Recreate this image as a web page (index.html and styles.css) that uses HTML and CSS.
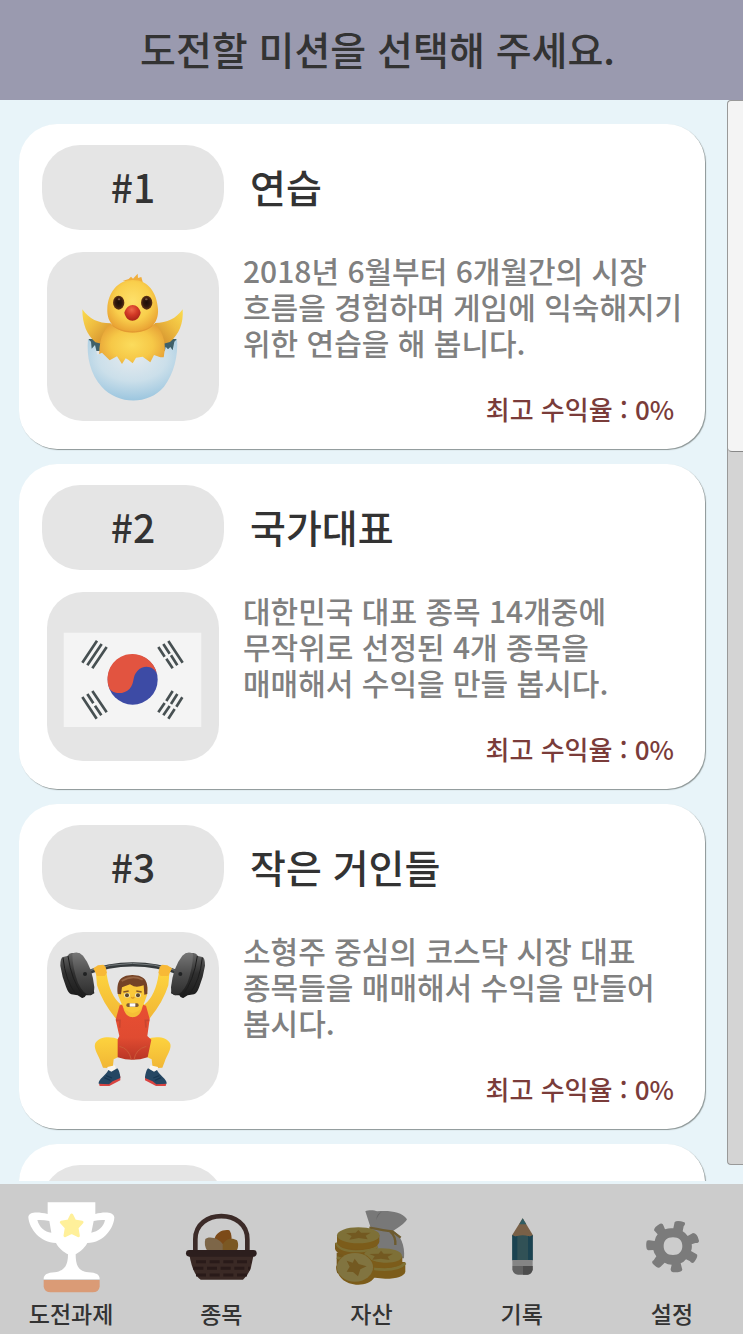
FILE: index.html
```html
<!DOCTYPE html>
<html lang="ko">
<head>
  <meta charset="UTF-8" />
  <meta name="viewport" content="width=device-width, initial-scale=1.0"/>
  <title>도전과제</title>
  <link rel="stylesheet" href="styles.css">
</head>
<body>

  <header class="header">
    <h1>도전할 미션을 선택해 주세요.</h1>
  </header>

  <main class="content">
    <div class="missions">

      <article class="card">
        <div class="card-head">
          <span class="number">#1</span>
          <h2>연습</h2>
        </div>
        <div class="card-body">
          <div class="picture">
            <svg viewBox="21 21 516 507" aria-hidden="true">
              <defs>
                <radialGradient id="chickHead" cx=".5" cy=".4" r=".6">
                  <stop offset="0" stop-color="#fde06a"/><stop offset=".6" stop-color="#f9cf4c"/><stop offset="1" stop-color="#e9a233"/>
                </radialGradient>
                <radialGradient id="chickBody" cx=".5" cy=".45" r=".58">
                  <stop offset="0" stop-color="#fbdc5c"/><stop offset=".55" stop-color="#f6c847"/><stop offset="1" stop-color="#e59e35"/>
                </radialGradient>
                <linearGradient id="wingLeft" x1="0" y1="0" x2="1" y2="1">
                  <stop offset="0" stop-color="#fbdc4e"/><stop offset=".4" stop-color="#efbd40"/><stop offset="1" stop-color="#c98027"/>
                </linearGradient>
                <linearGradient id="wingRight" x1="1" y1="0" x2="0" y2="1">
                  <stop offset="0" stop-color="#fbdc4e"/><stop offset=".4" stop-color="#efbd40"/><stop offset="1" stop-color="#c98027"/>
                </linearGradient>
                <radialGradient id="shell" cx=".5" cy=".3" r=".7">
                  <stop offset="0" stop-color="#e4eaee"/><stop offset=".55" stop-color="#cbdfea"/><stop offset="1" stop-color="#9cc6df"/>
                </radialGradient>
                <radialGradient id="beak" cx=".45" cy=".3" r=".7">
                  <stop offset="0" stop-color="#ee6848"/><stop offset=".5" stop-color="#d23a26"/><stop offset="1" stop-color="#a82318"/>
                </radialGradient>
                <radialGradient id="eye" cx=".5" cy=".5" r=".5">
                  <stop offset="0" stop-color="#1c0d08"/><stop offset=".6" stop-color="#32180d"/><stop offset="1" stop-color="#633516"/>
                </radialGradient>
              </defs>
              <path d="M146 282 L410 282 L404 318 L150 318Z" fill="#3f6069"/>
              <path d="M127 193 C148 222 174 235 212 235 L224 258 L187 297 L166 292 C141 270 127 238 127 193Z" fill="url(#wingLeft)"/>
              <path d="M428 193 C408 221 382 234 345 234 L332 258 L368 297 L390 291 C417 268 431 235 428 193Z" fill="url(#wingRight)"/>
              <path d="M210 238 C188 257 175 290 178 345 L242 375 L370 350 C382 300 370 260 345 238Z" fill="url(#chickBody)"/>
              <path d="M248 108 L266 102 L273 95 L279 101 L293 86 L294 99 L304 96 L309 114Z" fill="#f0ae3c"/>
              <path d="M278 105 C326 105 351 145 354 192 C357 237 326 263 278 263 C231 263 199 237 202 190 C204 144 232 105 278 105Z" fill="url(#chickHead)"/>
              <path d="M218 242 C247 266 309 267 337 242" fill="none" stroke="#dc9130" stroke-width="3" opacity=".6"/>
              <ellipse cx="236" cy="173" rx="17" ry="21" fill="url(#eye)"/>
              <ellipse cx="320" cy="173" rx="17" ry="21" fill="url(#eye)"/>
              <ellipse cx="237" cy="163" rx="4" ry="3" fill="#7a5644"/>
              <ellipse cx="319" cy="163" rx="4" ry="3" fill="#7a5644"/>
              <path d="M253 203 C257 189 267 180 278 180 C289 180 299 189 302 203 C299 218 288 227 277 227 C266 227 256 218 253 203Z" fill="url(#beak)"/>
              <path d="M144 282 L153 290 L155 311 L165 300 L172 329 L186 323 L209 346 L231 334 L246 357 L257 340 L265 344 L278 355 L288 338 L308 335 L331 352 L342 330 L361 337 L371 337 L377 305 L384 313 L391 306 L398 316 L403 290 L411 282 C415 332 402 386 372 425 C325 481 233 479 185 425 C151 387 139 336 144 282Z" fill="url(#shell)"/>
            </svg>
          </div>
          <div class="info">
            <p class="desc">2018년 6월부터 6개월간의 시장<br>흐름을 경험하며 게임에 익숙해지기<br>위한 연습을 해 봅니다.</p>
            <p class="best">최고 수익율 : 0%</p>
          </div>
        </div>
      </article>

      <article class="card">
        <div class="card-head">
          <span class="number">#2</span>
          <h2>국가대표</h2>
        </div>
        <div class="card-body">
          <div class="picture">
            <svg viewBox="21 21 516 507" aria-hidden="true">
              <rect x="71" y="143" width="413" height="283" fill="#f4f4f4"/>
              <circle cx="278" cy="284" r="75" fill="#3d4ba5"/>
              <path d="M207 308 A75 75 0 1 1 351 268 C343 243 311 237 292 258 C276 275 285 293 269 311 C250 331 216 327 207 308Z" fill="#e25440"/>
              <g stroke="#475052" stroke-width="8">
                <path d="M127 233 L171 167 M142 241 L185 177 M157 250 L200 186"/>
                <path d="M385 168 L428 233 M370 177 L389 206 M393 211 L412 241 M355 186 L374 215 M379 221 L398 250"/>
                <path d="M127 336 L170 401 M142 327 L160 355 M165 362 L184 391 M157 318 L200 382"/>
                <path d="M355 382 L374 354 M379 348 L398 318 M370 391 L389 363 M393 357 L412 327 M385 401 L404 372 M409 365 L427 337"/>
              </g>
            </svg>
          </div>
          <div class="info">
            <p class="desc">대한민국 대표 종목 14개중에<br>무작위로 선정된 4개 종목을<br>매매해서 수익을 만들 봅시다.</p>
            <p class="best">최고 수익율 : 0%</p>
          </div>
        </div>
      </article>

      <article class="card">
        <div class="card-head">
          <span class="number">#3</span>
          <h2>작은 거인들</h2>
        </div>
        <div class="card-body">
          <div class="picture">
            <svg viewBox="21 21 516 507" aria-hidden="true">
              <defs>
                <linearGradient id="plate" x1="0" y1="0" x2="0" y2="1">
                  <stop offset="0" stop-color="#666"/><stop offset=".45" stop-color="#303030"/><stop offset="1" stop-color="#1b1b1b"/>
                </linearGradient>
                <linearGradient id="plateFace" x1="0" y1="0" x2="0" y2="1">
                  <stop offset="0" stop-color="#777"/><stop offset=".5" stop-color="#4c4c4c"/><stop offset="1" stop-color="#2e2e2e"/>
                </linearGradient>
                <linearGradient id="skin" x1="0" y1="0" x2="0" y2="1">
                  <stop offset="0" stop-color="#fdd33e"/><stop offset="1" stop-color="#f1b635"/>
                </linearGradient>
                <linearGradient id="suit" x1="0" y1="0" x2="0" y2="1">
                  <stop offset="0" stop-color="#e84f32"/><stop offset=".6" stop-color="#e04b31"/><stop offset="1" stop-color="#b93626"/>
                </linearGradient>
                <g id="side">
                  <path d="M61 122 Q61 98 69 96 L82 93 Q88 83 97 84 L117 84 L151 136 L163 205 L151 211 L138 211 Q134 220 126 219 L113 211 L94 208 Q85 205 78 185 Q66 155 61 122Z" fill="url(#plate)"/>
                  <path d="M97 86 Q114 77 129 92 Q157 127 163 187 Q163 208 151 211 Q131 210 114 174 Q97 127 97 86Z" fill="url(#plateFace)"/>
                  <path d="M69 98 Q76 167 108 208 M84 93 Q94 167 130 213" fill="none" stroke="#1d1d1d" stroke-width="3"/>
                  <path d="M168 146 L171 181 Q187 233 231 285 L249 256 L241 237 Q209 210 200 147Z" fill="url(#skin)"/>
                  <path d="M160 130 L174 121 L190 119 L197 126 L201 144 L194 153 L171 153Z" fill="#f8b936"/>
                  <path d="M235 343 C216 333 174 333 165 357 C161 373 176 391 182 410 L189 428 L218 430 L221 403 L237 395Z" fill="url(#skin)"/>
                  <path d="M202 426 L225 421 L229 439 L204 441Z" fill="#f8f4ee"/>
                  <path d="M177 476 L179 483 L208 483 L241 466 L241 453 L205 463Z" fill="#d94340"/>
                  <path d="M176 476 C174 463 198 451 205 435 L214 440 L232 430 Q240 440 241 459 L218 469 L207 478Z" fill="#254763"/>
                  <path d="M198 452 L216 459 M193 458 L211 466" stroke="#173752" stroke-width="4"/>
                </g>
              </defs>
              <path d="M133 146 Q278 90 425 146" fill="none" stroke="#353a3c" stroke-width="13"/>
              <path d="M147 137 Q278 94 406 136" fill="none" stroke="#777d7f" stroke-width="3"/>
              <use href="#side"/>
              <use href="#side" transform="translate(556 0) scale(-1 1)"/>
              <circle cx="135" cy="147" r="6" fill="#202223"/>
              <circle cx="421" cy="147" r="6" fill="#202223"/>
              <path d="M240 239 Q278 222 316 239 L324 285 Q280 303 232 285Z" fill="#f5bf36"/>
              <path d="M239 241 L249 239 C251 289 305 289 308 239 L318 242 L329 282 L322 333 L334 344 L323 397 Q278 412 233 397 L233 343 L238 333 L227 284Z" fill="url(#suit)"/>
              <path d="M228 286 L240 286 L239 308 M328 286 L316 286 L318 308" fill="none" stroke="#c94630" stroke-width="5"/>
              <path d="M238 364 Q267 370 274 404 M319 364 Q287 372 282 404" fill="none" stroke="#cc5a38" stroke-width="3"/>
              <path d="M234 188 Q237 162 276 151 Q316 159 322 187 L321 211 L312 235 Q302 262 278 264 Q253 262 244 235 L234 211Z" fill="#fac93a"/>
              <path d="M233 207 C230 171 238 151 277 150 C318 151 325 171 322 207 L313 209 L311 181 Q293 188 281 184 L270 178 L246 187 L243 208Z" fill="#744226"/>
              <path d="M245 168 Q276 148 308 164" fill="none" stroke="#966443" stroke-width="5"/>
              <path d="M250 201 L266 198 M289 198 L305 201" stroke="#875726" stroke-width="4"/>
              <ellipse cx="261" cy="211" rx="9" ry="7" fill="#f0e6b8"/>
              <ellipse cx="294" cy="211" rx="9" ry="7" fill="#f0e6b8"/>
              <circle cx="261" cy="211" r="6" fill="#5e4a30"/>
              <circle cx="294" cy="211" r="6" fill="#5e4a30"/>
              <path d="M274 216 Q278 223 283 216" fill="none" stroke="#d99525" stroke-width="4"/>
              <rect x="259" y="235" width="37" height="11" rx="5" fill="#7d5a35"/>
              <rect x="269" y="235" width="17" height="10" fill="#fff"/>
            </svg>
          </div>
          <div class="info">
            <p class="desc">소형주 중심의 코스닥 시장 대표<br>종목들을 매매해서 수익을 만들어<br>봅시다.</p>
            <p class="best">최고 수익율 : 0%</p>
          </div>
        </div>
      </article>

      <article class="card">
        <div class="card-head">
          <span class="number"></span>
        </div>
        <div class="card-body">
          <div class="picture"></div>
        </div>
      </article>

    </div>
    <div class="scrollbar"><div class="thumb"></div></div>
  </main>

  <nav class="tabs">
    <ul>
      <li>
        <a href="#missions">
          <svg viewBox="78 180 270 282" aria-hidden="true">
            <path d="M143 187 H286 V222 C310 216 340 214 343 232 C342 262 313 309 262 309 C252 327 237 337 227 343 C227 378 236 394 265 397 C289 398 299 404 299 418 H131 C131 404 142 398 164 397 C193 393 204 377 204 343 C191 336 176 325 168 309 C121 309 88 267 85 232 C86 214 115 216 143 222Z" fill="#fff"/>
            <path d="M112 240 Q130 239 148 243 L154 278 C134 276 117 261 112 240Z M315 240 Q297 239 281 243 L274 278 C294 275 311 260 315 240Z" fill="#ccc"/>
            <path d="M215 225 L224 243 L246 247 L231 263 L235 287 L215 277 L195 287 L199 263 L184 247 L206 243Z" fill="#fff09a" stroke="#fff09a" stroke-width="9" stroke-linejoin="round"/>
            <path d="M131 420 H299 V440 Q296 457 278 457 H152 Q134 457 131 440Z" fill="#da9b76"/>
          </svg>
          <span>도전과제</span>
        </a>
      </li>
      <li>
        <a href="#stocks">
          <svg viewBox="528 180 270 282" aria-hidden="true">
            <path d="M643 298 C647 277 671 267 688 271 C696 281 696 301 693 319 L656 332Z" fill="#7c4a18"/>
            <path d="M616 297 C626 286 664 294 673 321 L671 333 H622 C614 321 613 309 616 297Z" fill="#7d6648"/>
            <path d="M668 315 C675 295 697 292 711 301 C717 313 714 327 709 334 H668Z" fill="#7b5823"/>
            <path d="M586 338 V298 C586 205 742 205 742 298 V338" fill="none" stroke="#3c2b28" stroke-width="14"/>
            <path d="M568 344 H761 L752 386 Q744 406 729 419 H602 Q579 405 568 344Z" fill="#3a2925"/>
            <rect x="558" y="330" width="212" height="20" rx="10" fill="#2c1e1d"/>
            <path d="M588 365 H754 M580 385 H750 M588 405 H746" fill="none" stroke="#291a19" stroke-width="9" stroke-dasharray="30 11"/>
          </svg>
          <span>종목</span>
        </a>
      </li>
      <li>
        <a href="#assets">
          <svg viewBox="228 60 270 282" aria-hidden="true">
            <path d="M362 143 L346 94 C355 89 373 90 382 94 C417 91 454 94 471 118 Q467 130 430 152 C450 164 466 195 462 235 L350 238Z" fill="#787878"/>
            <path d="M396 95 Q379 100 379 120 Q383 105 396 95Z" fill="#656565"/>
            <path d="M358 143 Q405 152 427 154 L452 173 M420 154 Q438 169 436 195" fill="none" stroke="#6d5b30" stroke-width="7"/>
            <path d="M260 218 H320 V280 H262 Q256 263 260 256Z" fill="#75581c"/>
            <path d="M261 232 Q277 240 300 240" fill="none" stroke="#7e7134" stroke-width="7"/>
            <path d="M255 190 L382 183 V219 Q365 232 316 232 Q263 228 255 207Z" fill="#7a5a1b"/>
            <path d="M258 188 Q266 213 316 214 Q361 214 383 200" fill="none" stroke="#7e7034" stroke-width="7"/>
            <path d="M261 165 H388 V186 Q382 207 324 208 Q268 206 261 190Z" fill="#7c5c1a"/>
            <ellipse cx="325" cy="166" rx="64" ry="24" fill="#7e7037"/>
            <path d="M325 150 L333 158 L362 158 L347 167 L353 178 L326 174 L298 179 L305 168 L288 160 L317 158Z" fill="#735921"/>
            <path d="M359 246 H466 V275 Q460 296 406 296 L360 292Z" fill="#7c5c1a"/>
            <path d="M367 266 Q442 276 466 249" fill="none" stroke="#7e7034" stroke-width="8"/>
            <path d="M346 229 H457 V247 Q445 264 395 264 L355 260Z" fill="#7c5c1a"/>
            <path d="M342 224 C347 196 459 200 456 229 C454 256 365 255 342 224Z" fill="#7e7037"/>
            <path d="M393 212 L401 221 L429 221 L413 230 L419 240 L393 236 L367 239 L374 229 L358 222 L386 221Z" fill="#735921"/>
            <path d="M260 262 C262 208 355 202 370 252 C375 268 370 284 374 292 C362 310 338 316 318 314 C285 311 262 292 260 262Z" fill="#7c5c1a"/>
            <ellipse cx="315" cy="262" rx="54" ry="43" fill="#817440"/>
            <path d="M314 236 L326 252 L350 259 L331 268 L324 289 L309 276 L290 275 L299 260 L290 242 L308 248Z" fill="#735921"/>
          </svg>
          <span>자산</span>
        </a>
      </li>
      <li>
        <a href="#records">
          <svg viewBox="-51 210 270 282" aria-hidden="true">
            <path d="M86 265 L116 314 V320 H55 V314Z" fill="#796047"/>
            <path d="M86 265 L97 283 H76Z" fill="#315d63"/>
            <path d="M55 315 Q63 322 70 318 Q86 314 102 318 Q110 322 116 315 V391 H55Z" fill="#315156"/>
            <path d="M55 315 Q63 322 70 318 V391 H55Z M116 315 Q110 322 102 318 V391 H116Z" fill="#1b4351"/>
            <path d="M55 390 H116 V408 H55Z" fill="#858585"/>
            <path d="M55 408 H116 V418 Q114 432 100 434 H72 Q57 432 55 418Z" fill="#626262"/>
            <path d="M87 408 H116 V418 Q114 432 100 434 H87Z" fill="#4d4d4d"/>
          </svg>
          <span>기록</span>
        </a>
      </li>
      <li>
        <a href="#settings">
          <svg viewBox="399 210 270 282" aria-hidden="true">
            <path fill-rule="evenodd" d="M538 295 L542 276 Q550 269 571 277 Q576 281 569 289 L566 304 Q575 309 581 318 L597 309 Q610 309 615 332 Q615 340 604 339 L593 343 Q595 354 591 363 L608 373 Q614 378 600 397 Q594 402 587 393 L576 388 Q569 397 560 400 L565 419 Q564 427 542 427 Q529 427 530 417 L533 404 Q521 404 512 398 L499 411 Q492 418 477 402 Q471 395 479 391 L487 379 Q480 371 478 360 L463 361 Q455 360 457 338 Q457 329 466 331 L482 333 Q483 322 491 313 L480 301 Q480 291 498 281 Q506 278 508 286 L513 298 Q526 293 538 295Z M537 322 C519 322 509 331 509 348 C509 365 519 375 537 375 C555 375 565 365 565 348 C565 331 555 322 537 322Z" fill="#7b7b7b"/>
          </svg>
          <span>설정</span>
        </a>
      </li>
    </ul>
  </nav>

</body>
</html>
```
FILE: styles.css
```css
* {
  box-sizing: border-box;
}
body {
  display: flex;
  flex-direction: column;
  height: 100vh;
  margin: 0;
  overflow: hidden;
  background: #e8f4f9;
  color: #333;
  font-family: "Noto Sans CJK KR", "Noto Sans", sans-serif;
  font-weight: 500;
}
h1, h2, p {
  margin: 0;
}
h1, h2 {
  font-size: 39px;
  font-weight: 500;
  line-height: 48px;
}
.header {
  padding: 24px 16px 28px 28px;
  background: #9a9aaf;
  text-align: center;
}
.content {
  display: flex;
  flex: 1;
  min-height: 0;
}
.missions {
  display: flex;
  flex: 1;
  flex-direction: column;
  gap: 15px;
  margin-bottom: 3px;
  padding: 24px 22px 0 19px;
  overflow: hidden;
}
.card {
  flex-shrink: 0;
  padding: 21px 23px 28px;
  background: #fff;
  border-radius: 38px;
  box-shadow: 1px 1px 1px #8b9494;
}
.card-head {
  display: flex;
  align-items: center;
  gap: 26px;
}
.card-head h2 {
  padding-bottom: 4px;
}
.number {
  width: 182px;
  height: 85px;
  background: #e5e5e5;
  border-radius: 38px;
  font-size: 39px;
  line-height: 82px;
  text-align: center;
}
.card-body {
  display: flex;
  gap: 24px;
  margin-top: 22px;
  padding-left: 5px;
}
.picture {
  flex-shrink: 0;
  width: 172px;
  height: 169px;
  background: #e5e5e5;
  border-radius: 36px;
}
.picture svg {
  display: block;
  width: 100%;
  height: 100%;
}
.info {
  display: flex;
  flex: 1;
  flex-direction: column;
  justify-content: space-between;
}
.desc {
  color: #808080;
  font-size: 30px;
  line-height: 36px;
  white-space: nowrap;
}
.best {
  padding-right: 8px;
  color: #7a3c3a;
  font-size: 26px;
  line-height: 24px;
  text-align: right;
}
.scrollbar {
  width: 16px;
  margin-bottom: 19px;
  background: #d4d4d4;
  border: 1px solid #999;
  border-right: 0;
  border-radius: 4px 0 0 4px;
}
.thumb {
  height: 33%;
  background: #f4f4f4;
  border-bottom: 1px solid #888;
  border-radius: 4px 0 0 4px;
}
.tabs {
  overflow: hidden;
  background: #ccc;
}
.tabs ul {
  display: grid;
  grid-template-columns: repeat(5, 1fr);
  margin: 0 -4px;
  padding: 16px 0 6px;
  list-style: none;
}
.tabs a {
  display: flex;
  flex-direction: column;
  align-items: center;
  gap: 4px;
  color: #333;
  font-size: 23px;
  line-height: 30px;
  text-decoration: none;
}
.tabs svg {
  width: 90px;
  height: 94px;
}
```
